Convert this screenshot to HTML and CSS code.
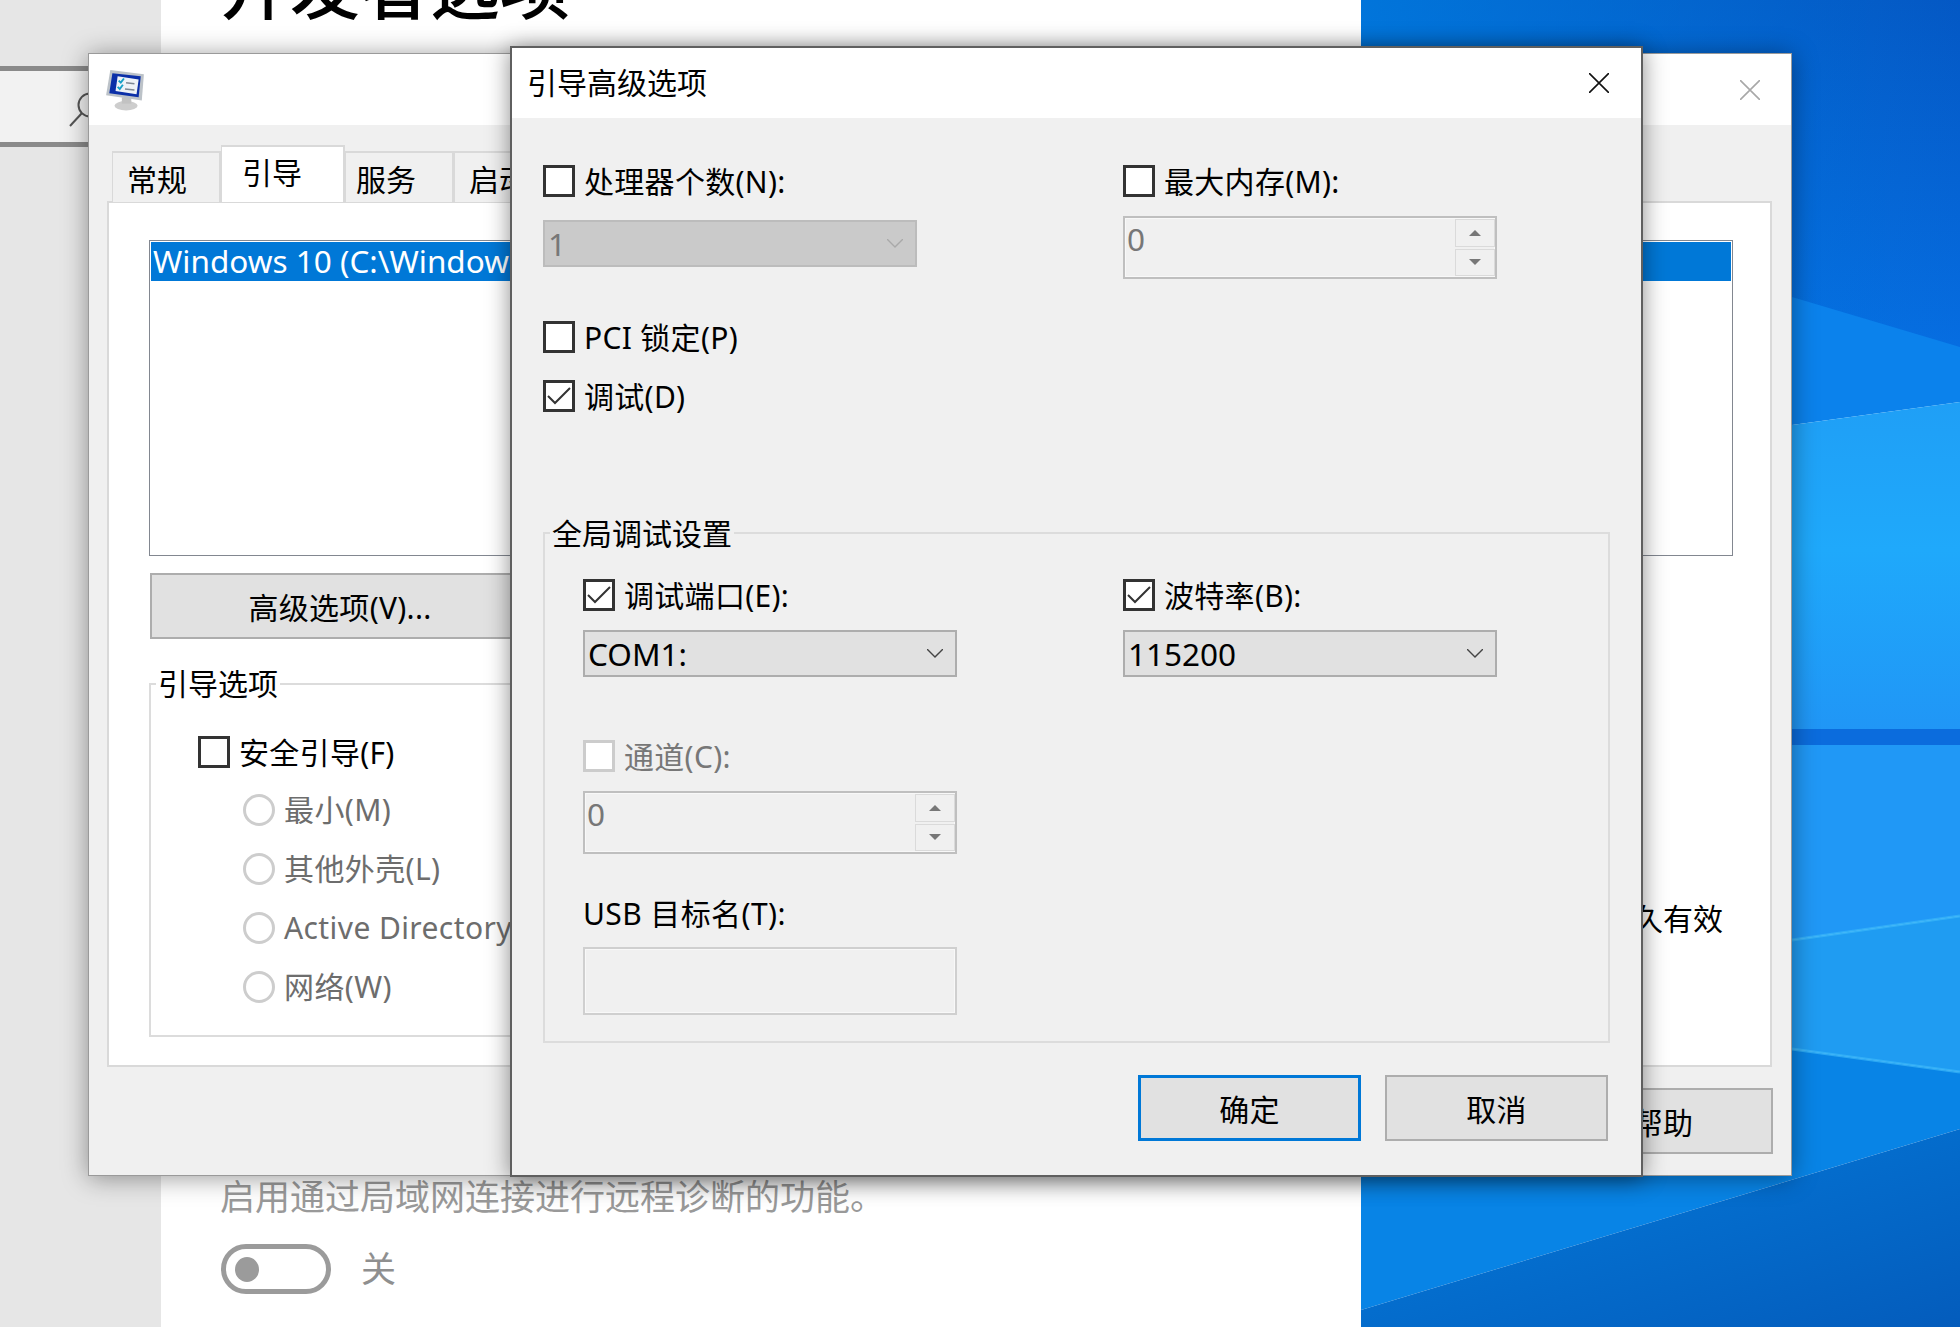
FILE: index.html
```html
<!DOCTYPE html>
<html lang="zh-CN">
<head>
  <meta charset="UTF-8" />
  <title>引导高级选项</title>
  <link rel="stylesheet" href="styles.css">
</head>
<body>

  <!-- Settings page behind the windows -->
  <div class="desktop">
    <aside class="sidebar">
      <div class="search-box">
        <svg class="search-icon" viewBox="0 0 36 36" fill="none" aria-hidden="true">
          <circle cx="22" cy="13" r="11.5" />
          <path d="M14 21L2 34" />
        </svg>
      </div>
    </aside>
    <main class="settings-page">
      <h1>开发者选项</h1>
      <p class="page-desc">启用通过局域网连接进行远程诊断的功能。</p>
      <div class="page-toggle">
        <span class="toggle-track"><span class="toggle-knob"></span></span>
        <span class="toggle-text">关</span>
      </div>
    </main>
    <svg class="wallpaper" viewBox="0 0 599 1327" preserveAspectRatio="none" aria-hidden="true">
      <defs>
        <linearGradient id="wall-top" x1="0" y1="0" x2="0" y2="1">
          <stop offset="0" stop-color="#0458c4" />
          <stop offset="1" stop-color="#066ee2" />
        </linearGradient>
        <linearGradient id="wall-left" x1="0" y1="0" x2="1" y2="0">
          <stop offset="0" stop-color="#007ce0" stop-opacity="0.8" />
          <stop offset="1" stop-color="#007ce0" stop-opacity="0" />
        </linearGradient>
        <linearGradient id="wall-mid" x1="0" y1="0" x2="0" y2="1">
          <stop offset="0" stop-color="#1f9ff6" />
          <stop offset="0.45" stop-color="#1fa9fb" />
          <stop offset="1" stop-color="#2096f6" />
        </linearGradient>
        <linearGradient id="wall-bottom" x1="0" y1="0" x2="1" y2="1">
          <stop offset="0" stop-color="#047cdc" />
          <stop offset="1" stop-color="#045cbc" />
        </linearGradient>
      </defs>
      <rect width="599" height="360" fill="url(#wall-top)" />
      <rect width="599" height="360" fill="url(#wall-left)" />
      <polygon points="431,297 599,347 599,402 431,425" fill="#0b82ec" />
      <polygon points="431,425 599,402 599,730 431,730" fill="url(#wall-mid)" />
      <rect x="431" y="729" width="168" height="16" fill="#0b6cdd" />
      <polygon points="431,745 599,745 599,916 431,940" fill="#2098f6" />
      <polygon points="431,940 599,916 599,1072 431,1049" fill="#1f9cf2" />
      <polygon points="0,1100 431,1049 599,1072 599,1129 0,1310" fill="#0884e6" />
      <polygon points="0,1310 599,1129 599,1327 0,1327" fill="url(#wall-bottom)" />
      <path class="wall-line" d="M431 940L599 916" />
      <path class="wall-line" d="M431 1049L599 1072" />
    </svg>
  </div>

  <!-- System configuration window -->
  <section class="window config-window">
    <header class="config-title">
      <svg class="config-icon" viewBox="0 0 36 40" aria-hidden="true">
        <ellipse cx="19" cy="35" rx="11" ry="4.5" fill="#cdcdcd" />
        <rect x="15" y="27" width="9" height="6" fill="#c2c2c2" />
        <polygon points="4,1 36,5 34,30 0,25" fill="#bcc2c8" />
        <polygon points="6,4 33,7 31,27 3,23" fill="#0b2fa8" />
        <polygon points="11,7 31,10 29,24 9,21" fill="#eef2f7" />
        <path d="M12 11l2 2 3-4M11 17l2 2 3-4" fill="none" stroke="#16a0c8" stroke-width="1.8" />
        <path d="M19 13l8 1M18 19l9 1" stroke="#7c8794" stroke-width="1.4" />
      </svg>
      <svg class="close-icon close-icon-off" viewBox="0 0 20 20" aria-hidden="true">
        <path d="M0 0L20 20M20 0L0 20" />
      </svg>
    </header>
    <div class="config-body">
      <nav class="tabs">
        <span class="tab">常规</span>
        <span class="tab tab-active">引导</span>
        <span class="tab tab-services">服务</span>
        <span class="tab">启动</span>
        <span class="tab">工具</span>
      </nav>
      <div class="tab-panel">
        <div class="boot-list">
          <div class="boot-item">Windows 10 (C:\Windows\system32) : 当前 OS; 默认 OS</div>
        </div>
        <button type="button" class="btn btn-advanced">高级选项(V)...</button>
        <div class="boot-row">
          <div class="group boot-group">
            <span class="group-title">引导选项</span>
            <label class="check">
              <span class="check-box"></span>
              <span>安全引导(F)</span>
            </label>
            <div class="radio-list">
              <span class="radio"><span class="radio-dot"></span>最小(M)</span>
              <span class="radio"><span class="radio-dot"></span>其他外壳(L)</span>
              <span class="radio"><span class="radio-dot"></span>Active Directory 修复(P)</span>
              <span class="radio"><span class="radio-dot"></span>网络(W)</span>
            </div>
          </div>
          <div class="boot-note">永久有效</div>
        </div>
      </div>
      <footer class="config-footer">
        <button type="button" class="btn btn-help">帮助</button>
      </footer>
    </div>
  </section>

  <!-- Advanced boot options dialog -->
  <section class="window options-dialog">
    <header class="dialog-title">
      <span>引导高级选项</span>
      <svg class="close-icon" viewBox="0 0 20 20" aria-hidden="true">
        <path d="M0 0L20 20M20 0L0 20" />
      </svg>
    </header>
    <div class="dialog-body">
      <div class="columns">
        <div class="column">
          <label class="check">
            <span class="check-box"></span>
            <span>处理器个数(N):</span>
          </label>
          <div class="select select-off">
            <span>1</span>
            <svg class="chevron" viewBox="0 0 16 9" aria-hidden="true"><path d="M0 0L8 8L16 0" /></svg>
          </div>
          <label class="check check-pci">
            <span class="check-box"></span>
            <span>PCI 锁定(P)</span>
          </label>
          <label class="check check-debug">
            <span class="check-box">
              <svg class="tick" viewBox="0 0 24 20" aria-hidden="true"><path d="M1 10L8 17L23 2" /></svg>
            </span>
            <span>调试(D)</span>
          </label>
        </div>
        <div class="column">
          <label class="check">
            <span class="check-box"></span>
            <span>最大内存(M):</span>
          </label>
          <div class="spin">
            <span class="spin-value">0</span>
            <span class="spin-buttons">
              <span class="spin-btn"><span class="arrow-up"></span></span>
              <span class="spin-btn"><span class="arrow-down"></span></span>
            </span>
          </div>
        </div>
      </div>

      <div class="group debug-group">
        <span class="group-title">全局调试设置</span>
        <div class="columns">
          <div class="column">
            <label class="check">
              <span class="check-box">
                <svg class="tick" viewBox="0 0 24 20" aria-hidden="true"><path d="M1 10L8 17L23 2" /></svg>
              </span>
              <span>调试端口(E):</span>
            </label>
            <div class="select">
              <span>COM1:</span>
              <svg class="chevron" viewBox="0 0 16 9" aria-hidden="true"><path d="M0 0L8 8L16 0" /></svg>
            </div>
            <label class="check check-channel check-off">
              <span class="check-box"></span>
              <span>通道(C):</span>
            </label>
            <div class="spin">
              <span class="spin-value">0</span>
              <span class="spin-buttons">
                <span class="spin-btn"><span class="arrow-up"></span></span>
                <span class="spin-btn"><span class="arrow-down"></span></span>
              </span>
            </div>
            <div class="usb-label">USB 目标名(T):</div>
            <div class="text-field"></div>
          </div>
          <div class="column">
            <label class="check">
              <span class="check-box">
                <svg class="tick" viewBox="0 0 24 20" aria-hidden="true"><path d="M1 10L8 17L23 2" /></svg>
              </span>
              <span>波特率(B):</span>
            </label>
            <div class="select">
              <span>115200</span>
              <svg class="chevron" viewBox="0 0 16 9" aria-hidden="true"><path d="M0 0L8 8L16 0" /></svg>
            </div>
          </div>
        </div>
      </div>

      <div class="dialog-actions">
        <button type="button" class="btn btn-ok">确定</button>
        <button type="button" class="btn">取消</button>
      </div>
    </div>
  </section>

</body>
</html>
```

FILE: styles.css
```css
/* Base */
* {
  box-sizing: border-box;
  font-family: "Noto Sans", "Noto Sans CJK SC", sans-serif;
}

html,
body {
  margin: 0;
  width: 1960px;
  height: 1327px;
  overflow: hidden;
}

body {
  position: relative;
  font-size: 30px;
  line-height: 40px;
  color: #000;
}

/* Backdrop: settings page and wallpaper */
.desktop {
  display: grid;
  grid-template-columns: 161px 1200px 599px;
  height: 1327px;
}

.sidebar {
  background: #e6e6e6;
  padding-top: 66px;
}

.search-box {
  width: 140px;
  height: 81px;
  background: #f2f2f2;
  border-top: 5px solid #8a8a8a;
  border-bottom: 5px solid #8a8a8a;
  padding: 21px 0 0 68px;
}

.search-icon {
  display: block;
  width: 36px;
  height: 36px;
  stroke: #555;
  stroke-width: 2;
}

.settings-page {
  background: #fff;
  padding-left: 59px;
}

h1 {
  margin: -53px 0 0;
  font-size: 70px;
  line-height: 80px;
  font-weight: 500;
}

.page-desc {
  margin: 1148px 0 0;
  font-size: 35px;
  line-height: 44px;
  color: #999;
}

.page-toggle {
  display: flex;
  align-items: center;
  gap: 30px;
  margin: 25px 0 0 1px;
}

.toggle-track {
  display: flex;
  align-items: center;
  width: 110px;
  height: 50px;
  padding-left: 9px;
  border: 5px solid #9b9b9b;
  border-radius: 25px;
}

.toggle-knob {
  width: 24px;
  height: 25px;
  border-radius: 50%;
  background: #9b9b9b;
}

.toggle-text {
  font-size: 35px;
  color: #8f8f8f;
}

.wallpaper {
  display: block;
  width: 599px;
  height: 1327px;
}

.wall-line {
  fill: none;
  stroke: #3ab8f9;
  stroke-width: 3;
  opacity: 0.7;
}

/* Windows sit freely on the desktop */
.window {
  position: absolute;
  background: #f0f0f0;
}

.close-icon {
  width: 20px;
  height: 20px;
  fill: none;
  stroke: #111;
  stroke-width: 1.6;
}

.close-icon-off {
  stroke: #a8a8a8;
}

/* System configuration window */
.config-window {
  left: 88px;
  top: 53px;
  width: 1704px;
  height: 1123px;
  border: 1px solid #9a9a9a;
  box-shadow: 0 2px 24px rgba(0, 0, 0, 0.4);
}

.config-title {
  display: flex;
  justify-content: space-between;
  align-items: center;
  height: 71px;
  padding: 0 31px 0 17px;
  background: #fff;
}

.config-icon {
  width: 38px;
  height: 42px;
}

.config-body {
  padding: 0 19px 0 18px;
}

.tabs {
  display: flex;
  align-items: flex-end;
  height: 76px;
  padding-left: 5px;
}

.tab {
  width: 109px;
  height: 51px;
  margin-bottom: -1px;
  padding-left: 14px;
  border: 2px solid #d9d9d9;
  border-bottom: 0;
  border-left-width: 1px;
  background: #f0f0f0;
  line-height: 54px;
}

.tab-active {
  position: relative;
  width: 124px;
  height: 57px;
  padding-left: 20px;
  background: #fff;
  line-height: 52px;
}

.tab-services {
  padding-left: 10px;
}

.tab-panel {
  height: 866px;
  padding: 37px 37px 0 40px;
  background: #fff;
  border: 2px solid #d9d9d9;
}

.boot-list {
  height: 316px;
  padding: 1px;
  border: 1px solid #828790;
  overflow: hidden;
}

.boot-item {
  height: 39px;
  padding-left: 2px;
  background: #0078d7;
  color: #fff;
  font-size: 31.5px;
  line-height: 37px;
  white-space: nowrap;
}

.btn {
  display: block;
  width: 223px;
  height: 66px;
  padding: 0;
  background: #e1e1e1;
  border: 2px solid #adadad;
  font-size: 30px;
  letter-spacing: 0.3px;
  color: #000;
}

.btn-advanced {
  width: 380px;
  margin: 17px 0 0 1px;
}

.boot-row {
  display: flex;
  justify-content: space-between;
  margin-top: 44px;
}

.boot-group {
  width: 800px;
  height: 354px;
  padding: 51px 0 0 47px;
  background: #fff;
}

.boot-group .group-title {
  top: -21px;
  background: #fff;
}

.boot-note {
  margin: 216px 10px 0 0;
  white-space: nowrap;
}

.radio-list {
  display: flex;
  flex-direction: column;
  gap: 27px;
  margin: 26px 0 0 45px;
}

.radio {
  display: flex;
  align-items: center;
  gap: 9px;
  height: 32px;
  color: #6d6d6d;
  letter-spacing: 0.4px;
  white-space: nowrap;
}

.radio-dot {
  width: 32px;
  height: 32px;
  background: #fff;
  border: 3px solid #cdcdcd;
  border-radius: 50%;
}

.config-footer {
  display: flex;
  justify-content: flex-end;
  padding-top: 21px;
}

.btn-help {
  width: 220px;
  margin-right: -1px;
}

/* Shared checkbox and group box */
.check {
  display: flex;
  align-items: center;
  gap: 9px;
  height: 32px;
  letter-spacing: 0.3px;
  white-space: nowrap;
}

.check > span:last-child {
  padding-top: 2px;
}

.check-box {
  display: flex;
  align-items: center;
  justify-content: center;
  width: 32px;
  height: 32px;
  background: #fff;
  border: 3px solid #333;
}

.check-off {
  color: #777;
}

.check-off .check-box {
  border-color: #ccc;
}

.tick {
  width: 24px;
  height: 20px;
  fill: none;
  stroke: #333;
  stroke-width: 2;
}

.group {
  position: relative;
  border: 2px solid #dcdcdc;
}

.group-title {
  position: absolute;
  left: 5px;
  top: -20px;
  padding: 0 2px;
  background: #f0f0f0;
}

/* Advanced boot options dialog */
.options-dialog {
  left: 510px;
  top: 46px;
  width: 1133px;
  height: 1131px;
  border: 2px solid #5f5f5f;
  box-shadow: 0 2px 22px rgba(0, 0, 0, 0.45);
}

.dialog-title {
  display: flex;
  justify-content: space-between;
  align-items: center;
  height: 70px;
  padding: 0 32px 0 15px;
  background: #fff;
}

.dialog-body {
  padding: 47px 33px 0 31px;
}

.columns {
  display: grid;
  grid-template-columns: 580px 1fr;
}

.debug-group .columns {
  grid-template-columns: 540px 1fr;
}

.select {
  display: flex;
  justify-content: space-between;
  align-items: center;
  width: 374px;
  height: 47px;
  margin-top: 19px;
  padding: 0 12px 0 3px;
  background: #e1e1e1;
  border: 2px solid #adadad;
  font-size: 31.5px;
  white-space: nowrap;
}

.select-off {
  margin-top: 23px;
  background: #cacaca;
  border-color: #bcbcbc;
  color: #777;
}

.select-off .chevron {
  stroke: #a9a9a9;
}

.chevron {
  width: 16px;
  height: 9px;
  fill: none;
  stroke: #444;
  stroke-width: 1.4;
}

.check-pci {
  margin-top: 54px;
}

.check-debug {
  margin-top: 27px;
}

.spin {
  display: flex;
  justify-content: space-between;
  width: 374px;
  height: 63px;
  margin-top: 19px;
  background: #f0f0f0;
  border: 2px solid #bfbfbf;
  box-shadow: inset 0 0 0 1px #f8f8f8;
  color: #777;
}

.spin-value {
  padding-left: 2px;
  font-size: 31.5px;
  line-height: 42px;
}

.spin-buttons {
  display: flex;
  flex-direction: column;
  gap: 2px;
  width: 41px;
  padding: 1px 0 1px 1px;
}

.spin-btn {
  flex: 1;
  display: flex;
  align-items: center;
  justify-content: center;
  border: 1px solid #dadada;
}

.arrow-up,
.arrow-down {
  width: 0;
  height: 0;
  border-left: 6px solid transparent;
  border-right: 6px solid transparent;
}

.arrow-up {
  border-bottom: 6px solid #777;
}

.arrow-down {
  border-top: 6px solid #777;
}

.debug-group {
  width: 1067px;
  height: 511px;
  margin-top: 120px;
  padding: 45px 0 0 38px;
}

.check-channel {
  margin-top: 63px;
}

.usb-label {
  margin-top: 40px;
  letter-spacing: 0.4px;
  white-space: nowrap;
}

.text-field {
  width: 374px;
  height: 68px;
  margin-top: 13px;
  background: #f0f0f0;
  border: 2px solid #cfcfcf;
  box-shadow: inset 0 0 0 1px #f8f8f8;
}

.dialog-actions {
  display: flex;
  justify-content: flex-end;
  gap: 24px;
  margin-top: 32px;
}

.btn-ok {
  border: 3px solid #0078d7;
}
```
